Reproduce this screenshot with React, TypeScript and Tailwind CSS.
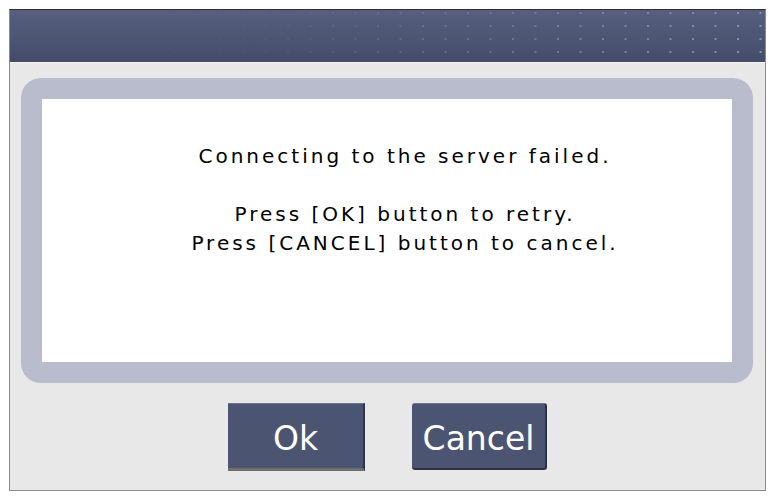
const msgFont = { fontFamily: '"DejaVu Sans", "Noto Sans CJK JP", sans-serif' };

function Dots() {
  return (
    <svg className="pointer-events-none absolute inset-0 h-full w-full" aria-hidden>
      <defs>
        <pattern id="dots" width="22.5" height="13" patternUnits="userSpaceOnUse" x="7" y="2">
          <rect x="0" y="0" width="2" height="2" fill="#8a93ad" />
        </pattern>
        <linearGradient id="fade" x1="0" x2="1" y1="0" y2="0">
          <stop offset="0" stopColor="#fff" stopOpacity="0" />
          <stop offset="0.35" stopColor="#fff" stopOpacity="0.1" />
          <stop offset="1" stopColor="#fff" stopOpacity="1" />
        </linearGradient>
        <mask id="fadeMask">
          <rect width="100%" height="100%" fill="url(#fade)" />
        </mask>
      </defs>
      <rect width="100%" height="100%" fill="url(#dots)" mask="url(#fadeMask)" />
    </svg>
  );
}

export default function App() {
  return (
    <div className="h-[500px] w-[775px] bg-white pl-[9px] pt-[9px]">
      <div className="flex h-[482px] w-[757px] flex-col border border-t-[#2a2d38] border-x-[#8c8c8c] border-b-[#8c8c8c] bg-[#e8e8e8]">
        <div className="relative h-[52px] shrink-0 bg-gradient-to-b from-[#56607e] to-[#444c68]">
          <Dots />
        </div>
        <div className="h-[1px] bg-[#f4f4f6]" />
        <div className="ml-[11px] mr-[12px] mt-[15px] h-[305px] rounded-[20px] bg-[#b9bccc] p-[21px]">
          <div
            className="flex h-full flex-col items-center bg-white pl-[36px] pt-[43px] text-[20px] leading-[29px] tracking-[3px] text-black"
            style={msgFont}
          >
            <p>Connecting to the server failed.</p>
            <p className="mt-[29px]">Press [OK] button to retry.</p>
            <p>Press [CANCEL] button to cancel.</p>
          </div>
        </div>
        <div className="mt-[20px] flex justify-center gap-[47px]" style={msgFont}>
          <button className="h-[68px] w-[137px] border-t border-r-2 border-b-[3px] border-t-[#6a7390] border-r-[#30364a] border-b-[#6e6e6e] bg-[#4b5572] pt-[5px] text-[33px] text-white">
            Ok
          </button>
          <button className="h-[67px] w-[135px] rounded-[3px] border-t border-r-2 border-b-2 border-t-[#6a7390] border-r-[#2c3246] border-b-[#2c3246] bg-[#4b5572] pt-[5px] text-[33px] text-white">
            Cancel
          </button>
        </div>
      </div>
    </div>
  );
}
